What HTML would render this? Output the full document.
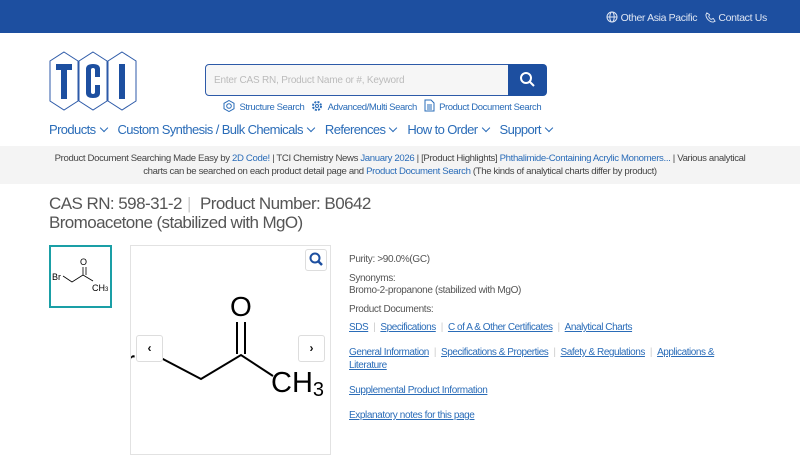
<!DOCTYPE html>
<html><head><meta charset="utf-8"><style>
*{margin:0;padding:0;box-sizing:border-box}
body{width:800px;height:450px;overflow:hidden;background:#fff;font-family:"Liberation Sans",sans-serif;color:#444;position:relative}
.a{position:absolute;white-space:nowrap}
a,.l{color:#2a6cb8;text-decoration:none}
.u{text-decoration:underline;color:#2a6cb8}
.sep{color:#ccc;margin:0 5px}
.ch{display:inline-block;width:6px;height:6px;border-right:1.3px solid #2a6cb8;border-bottom:1.3px solid #2a6cb8;transform:rotate(45deg);margin:0 11px 3px 5px}
</style></head><body>
<div class="a" style="left:0;top:0;width:800px;height:33px;background:#1d4fa0"></div>
<div class="a" style="left:606px;top:11px;font-size:10.5px;color:#dfe6f3;letter-spacing:-0.35px">
<svg width="12" height="12" viewBox="0 0 12 12" style="vertical-align:-2px"><circle cx="6" cy="6" r="5" fill="none" stroke="#dfe6f3"/><ellipse cx="6" cy="6" rx="2.2" ry="5" fill="none" stroke="#dfe6f3"/><path d="M1 6h10" stroke="#dfe6f3"/></svg> Other Asia Pacific &nbsp;&nbsp;<svg width="11" height="11" viewBox="0 0 12 12" style="vertical-align:-2px"><path d="M2 1l3 2-1 2c1 2 2 3 3 3l2-1 2 3-2 1C5 11 1 7 1 3z" fill="none" stroke="#dfe6f3"/></svg> Contact Us</div>
<svg class="a" style="left:49px;top:51px" width="90" height="60" viewBox="0 0 90 60">
<g fill="none" stroke="#2d5aa8" stroke-width="1">
<polygon points="15,1 29,10 29,50 15,59 1,50 1,10"/>
<polygon points="44,1 58,10 58,50 44,59 30,50 30,10"/>
<polygon points="73,1 87,10 87,50 73,59 59,50 59,10"/>
</g>
<g fill="#1d4fa0">
<rect x="7" y="13" width="16" height="6"/><rect x="12" y="13" width="6" height="35"/>
<path d="M37 18q0-5 7-5t7 5v8h-5v-7q0-2-2-2t-2 2v22q0 2 2 2t2-2v-7h5v8q0 5-7 5t-7-5z"/>
<rect x="70" y="13" width="6" height="35"/>
</g>
</svg>
<div class="a" style="left:205px;top:64px;width:304px;height:32px;border:1px solid #2d5aa8;border-radius:4px 0 0 4px;background:#f6f6f6;font-size:10px;color:#bbb;padding:10px 8px;letter-spacing:-0.2px">Enter CAS RN, Product Name or #, Keyword</div>
<div class="a" style="left:508px;top:64px;width:39px;height:32px;background:#1d4fa0;border-radius:0 4px 4px 0"><svg width="39" height="32"><circle cx="18" cy="14" r="5" fill="none" stroke="#fff" stroke-width="2"/><path d="M22 18l4 4" stroke="#fff" stroke-width="2"/></svg></div>
<div class="a l" style="left:223px;top:99px;font-size:9.5px;letter-spacing:-0.4px">
<svg width="12" height="12" style="vertical-align:-2px"><polygon points="6,0.5 11,3.3 11,8.7 6,11.5 1,8.7 1,3.3" fill="none" stroke="#2a6cb8"/><circle cx="6" cy="6" r="2.3" fill="none" stroke="#2a6cb8"/></svg> &nbsp;Structure Search &nbsp;
<svg width="12" height="12" style="vertical-align:-2px"><circle cx="6" cy="6" r="4" fill="none" stroke="#2a6cb8" stroke-width="2" stroke-dasharray="2 1.2"/><circle cx="6" cy="6" r="1.5" fill="none" stroke="#2a6cb8"/></svg> &nbsp;Advanced/Multi Search &nbsp;
<svg width="11" height="13" style="vertical-align:-2px"><path d="M1 1h6l3 3v8H1z M3 6h5M3 8h5M3 10h5" fill="none" stroke="#2a6cb8"/></svg> &nbsp;Product Document Search</div>
<div class="a l" style="left:49px;top:122px;font-size:13px;letter-spacing:-0.6px">Products<span class="ch"></span>Custom Synthesis / Bulk Chemicals<span class="ch"></span>References<span class="ch"></span>How to Order<span class="ch"></span>Support<span class="ch"></span></div>
<div class="a" style="left:0;top:146px;width:800px;height:38px;background:#f4f4f4"></div>
<div class="a" style="left:50px;top:152px;width:700px;text-align:center;white-space:normal;font-size:9.6px;line-height:13px;color:#444;letter-spacing:-0.35px">Product Document Searching Made Easy by <a>2D Code!</a> | TCI Chemistry News <a>January 2026</a> | [Product Highlights] <a>Phthalimide-Containing Acrylic Monomers...</a> | Various analytical charts can be searched on each product detail page and <a>Product Document Search</a> (The kinds of analytical charts differ by product)</div>
<div class="a" style="left:49px;top:194px;font-size:17px;color:#555;letter-spacing:-0.55px">CAS RN: 598-31-2<span class="sep">|</span> Product Number: B0642</div>
<div class="a" style="left:49px;top:213px;font-size:17px;color:#555;letter-spacing:-0.6px">Bromoacetone (stabilized with MgO)</div>
<div class="a" style="left:49px;top:245px;width:63px;height:63px;border:2px solid #1a9fa6">
<svg width="59" height="59"><path d="M12 29l9 6 11-7V20M35 20v8M32 28l10 6" stroke="#000" fill="none" stroke-width="0.8"/><text x="1" y="33" font-size="9">Br</text><text x="29" y="18" font-size="9">O</text><text x="41" y="44" font-size="9">CH<tspan font-size="6">3</tspan></text></svg></div>
<div class="a" style="left:130px;top:245px;width:201px;height:210px;border:1px solid #e2e2e2;overflow:hidden">
<svg width="199" height="210" style="position:absolute;left:0;top:0"><text x="-22" y="123" font-size="26">Br</text><path d="M30 112l40 21 40-24 32 21" stroke="#000" stroke-width="2" fill="none"/><path d="M106 76v32M114 76v32" stroke="#000" stroke-width="2"/><text x="99" y="70" font-size="28">O</text><text x="140" y="146" font-size="29">CH<tspan font-size="20" dy="4">3</tspan></text></svg>
<div class="a" style="left:174px;top:3px;width:22px;height:22px;border:1px solid #ddd;border-radius:3px;background:#fff"><svg width="20" height="20"><circle cx="9" cy="8" r="4.5" fill="none" stroke="#1d4fa0" stroke-width="2"/><path d="M12 11l4 4" stroke="#1d4fa0" stroke-width="2.5"/></svg></div>
<div class="a" style="left:5px;top:89px;width:27px;height:27px;border:1px solid #ddd;border-radius:3px;background:#fff;font-size:12px;font-weight:bold;text-align:center;line-height:25px;color:#111">‹</div>
<div class="a" style="left:167px;top:89px;width:27px;height:27px;border:1px solid #ddd;border-radius:3px;background:#fff;font-size:12px;font-weight:bold;text-align:center;line-height:25px;color:#111">›</div>
</div>
<div class="a" style="left:349px;top:254px;font-size:10px;color:#555;letter-spacing:-0.35px;line-height:12px">Purity: &gt;90.0%(GC)</div>
<div class="a" style="left:349px;top:273px;font-size:10px;color:#555;letter-spacing:-0.35px;line-height:12px">Synonyms:<br>Bromo-2-propanone (stabilized with MgO)</div>
<div class="a" style="left:349px;top:304px;font-size:10px;color:#555;letter-spacing:-0.35px">Product Documents:</div>
<div class="a" style="left:349px;top:322px;font-size:10px;letter-spacing:-0.45px"><span class="u">SDS</span><span class="sep">|</span><span class="u">Specifications</span><span class="sep">|</span><span class="u">C of A &amp; Other Certificates</span><span class="sep">|</span><span class="u">Analytical Charts</span></div>
<div class="a" style="left:349px;top:347px;font-size:10px;letter-spacing:-0.45px;white-space:normal;width:375px;line-height:12.5px"><span class="u">General Information</span><span class="sep">|</span><span class="u">Specifications &amp; Properties</span><span class="sep">|</span><span class="u">Safety &amp; Regulations</span><span class="sep">|</span><span class="u">Applications &amp; Literature</span></div>
<div class="a u" style="left:349px;top:385px;font-size:10px;letter-spacing:-0.4px">Supplemental Product Information</div>
<div class="a u" style="left:349px;top:410px;font-size:10px;letter-spacing:-0.4px">Explanatory notes for this page</div>
</body></html>
